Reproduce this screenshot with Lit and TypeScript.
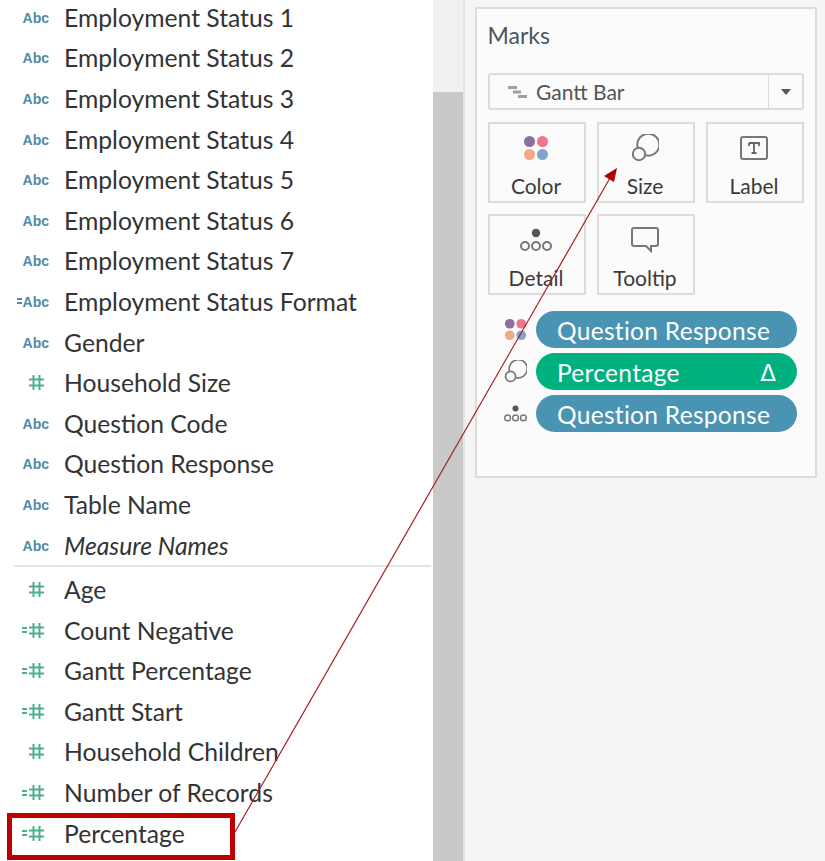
import { LitElement, css, html, svg } from 'lit'
import { customElement } from 'lit/decorators.js'

type Kind = 'abc' | 'calcAbc' | 'num' | 'calcNum'

const dims: [Kind, string, boolean?][] = [
  ['abc', 'Employment Status 1'],
  ['abc', 'Employment Status 2'],
  ['abc', 'Employment Status 3'],
  ['abc', 'Employment Status 4'],
  ['abc', 'Employment Status 5'],
  ['abc', 'Employment Status 6'],
  ['abc', 'Employment Status 7'],
  ['calcAbc', 'Employment Status Format'],
  ['abc', 'Gender'],
  ['num', 'Household Size'],
  ['abc', 'Question Code'],
  ['abc', 'Question Response'],
  ['abc', 'Table Name'],
  ['abc', 'Measure Names', true],
]

const measures: [Kind, string][] = [
  ['num', 'Age'],
  ['calcNum', 'Count Negative'],
  ['calcNum', 'Gantt Percentage'],
  ['calcNum', 'Gantt Start'],
  ['num', 'Household Children'],
  ['calcNum', 'Number of Records'],
  ['calcNum', 'Percentage'],
]

const hash = (color: string) => svg`
  <svg class="hash" width="17" height="17" viewBox="0 0 17 17" fill="none" stroke=${color} stroke-width="2">
    <path d="M5.5 1v15M11.5 1v15M1 5.5h15M1 11.5h15" />
  </svg>`

const colorIcon = (size: number) => html`
  <svg width=${size} height=${size} viewBox="0 0 26 26">
    <circle cx="6.5" cy="6.5" r="5.5" fill="#8b6f9e" />
    <circle cx="19.5" cy="6.5" r="5.5" fill="#f0758a" />
    <circle cx="6.5" cy="19.5" r="5.5" fill="#f3a983" />
    <circle cx="19.5" cy="19.5" r="5.5" fill="#7fa5cf" />
  </svg>`

const sizeIcon = (size: number) => html`
  <svg width=${size} height=${size} viewBox="0 0 28 28" fill="none" stroke="#777" stroke-width="2">
    <path d="M6.6 13.2A11 11 0 1 1 14.8 21.4" />
    <circle cx="8" cy="20" r="6.2" />
  </svg>`

const detailIcon = (w: number) => html`
  <svg width=${w} height=${w * 0.75} viewBox="0 0 32 24" fill="none" stroke="#777" stroke-width="2">
    <circle cx="16" cy="5" r="4.2" fill="#555" stroke="none" />
    <circle cx="5" cy="18" r="4" />
    <circle cx="16" cy="18" r="4" />
    <circle cx="27" cy="18" r="4" />
  </svg>`

@customElement('app-root')
export class AppRoot extends LitElement {
  static styles = css`
    :host {
      display: block;
      position: relative;
      width: 825px;
      height: 861px;
      overflow: hidden;
      background: #f5f5f5;
      font-family: Lato, 'Open Sans', sans-serif;
      color: #333;
    }
    .page {
      display: flex;
      height: 100%;
    }
    .fields {
      width: 433px;
      flex: none;
      background: #fff;
      padding: 0 2px 0 14px;
      box-sizing: border-box;
      overflow: hidden;
    }
    .row {
      display: flex;
      align-items: center;
      height: 40.6px;
      font-size: 24.7px;
      white-space: nowrap;
    }
    .first {
      margin-top: -3px;
    }
    .row i {
      font-style: italic;
    }
    .glyph {
      width: 50px;
      flex: none;
      display: flex;
      align-items: center;
      justify-content: flex-end;
      padding-right: 15px;
      box-sizing: border-box;
    }
    .abc {
      font: bold 14px 'Liberation Sans', Arial, sans-serif;
      color: #4e8ca8;
      margin-top: 1px;
    }
    .eq {
      display: inline-block;
      width: 5px;
      height: 2px;
      border-top: 2px solid;
      border-bottom: 2px solid;
      margin-right: 1px;
    }
    .eq.blue {
      color: #4e8ca8;
    }
    .eq.green {
      color: #4fae8b;
      width: 4.5px;
      margin-right: 1.5px;
    }
    .hash {
      display: block;
      margin-right: 4px;
    }
    .divider {
      height: 2px;
      background: #e4e4e4;
    }
    .measures {
      margin-top: 2px;
    }
    .scroll {
      width: 30px;
      flex: none;
      background: #f0f0f0;
      display: flex;
      flex-direction: column;
      padding-top: 92px;
      box-sizing: border-box;
    }
    .thumb {
      flex: 1;
      background: #c9c9c9;
    }
    .side {
      flex: 1;
      border-left: 2px solid #e6e6e6;
      padding: 7px 8px 0 10px;
    }
    .marks {
      height: 471px;
      box-sizing: border-box;
      background: #fbfbfb;
      border: 2px solid #dcdcdc;
      padding: 0 11px;
    }
    .title {
      font-size: 23px;
      line-height: 28px;
      margin-top: 12px;
      color: #4a5560;
      margin-left: -0.5px;
    }
    .dropdown {
      display: flex;
      align-items: center;
      height: 37px;
      margin-top: 24px;
      border: 2px solid #dcdcdc;
      border-radius: 3px;
      box-sizing: border-box;
      font-size: 21px;
      color: #555;
    }
    .dropdown .mark {
      flex: 1;
      display: flex;
      align-items: center;
      gap: 9px;
      padding-left: 18px;
    }
    .caret {
      width: 33px;
      height: 100%;
      border-left: 1px solid #dcdcdc;
      display: flex;
      align-items: center;
      justify-content: center;
    }
    .caret::after {
      content: '';
      border-left: 5.5px solid transparent;
      border-right: 5.5px solid transparent;
      border-top: 6px solid #555;
    }
    .cards {
      display: grid;
      grid-template-columns: repeat(3, 98px);
      grid-auto-rows: 81px;
      gap: 11px;
      margin-top: 12px;
    }
    .card {
      border: 2px solid #dcdcdc;
      box-sizing: border-box;
      display: flex;
      flex-direction: column;
      align-items: center;
      font-size: 21px;
      color: #3a3a3a;
    }
    .card .ico {
      flex: none;
      height: 44px;
      display: flex;
      align-items: center;
      justify-content: center;
      margin-top: 2px;
      margin-left: -2px;
    }
    .card span {
      flex: none;
      line-height: 31px;
      margin-left: -2px;
    }
    .pills {
      display: flex;
      flex-direction: column;
      gap: 5px;
      margin-top: 16px;
    }
    .pillrow {
      display: flex;
      align-items: center;
    }
    .pillico {
      width: 48px;
      flex: none;
      display: flex;
      justify-content: flex-end;
      padding-right: 9px;
      box-sizing: border-box;
    }
    .pill {
      width: 261px;
      height: 37px;
      border-radius: 19px;
      background: #4a94b3;
      color: #fff;
      font-size: 24.5px;
      display: flex;
      align-items: center;
      justify-content: space-between;
      padding: 2px 21px 0 21px;
      box-sizing: border-box;
      letter-spacing: 0.3px;
    }
    .pill.green {
      background: #00b180;
    }
    .delta {
      font: 23px 'DejaVu Sans', sans-serif;
      letter-spacing: 0;
    }
    .overlay {
      position: absolute;
      inset: 0;
      pointer-events: none;
    }
    .redbox {
      position: absolute;
      left: 7px;
      top: 813px;
      width: 228px;
      height: 47px;
      box-sizing: border-box;
      border: 5px solid #c00000;
    }
  `

  private glyph(kind: Kind) {
    if (kind === 'abc') return html`<span class="abc">Abc</span>`
    if (kind === 'calcAbc') return html`<span class="eq blue"></span><span class="abc">Abc</span>`
    if (kind === 'num') return hash('#4fae8b')
    return html`<span class="eq green"></span>${hash('#4fae8b')}`
  }

  private row(kind: Kind, name: string, italic = false, first = false) {
    return html`
      <div class="row ${first ? 'first' : ''}">
        <span class="glyph">${this.glyph(kind)}</span>
        ${italic ? html`<i>${name}</i>` : name}
      </div>`
  }

  render() {
    return html`
      <div class="page">
        <div class="fields">
          ${dims.map(([k, n, it], i) => this.row(k, n, it, i === 0))}
          <div class="divider"></div>
          <div class="measures">${measures.map(([k, n]) => this.row(k, n))}</div>
        </div>
        <div class="scroll"><div class="thumb"></div></div>
        <div class="side">
          <div class="marks">
            <div class="title">Marks</div>
            <div class="dropdown">
              <div class="mark">
                <svg width="19" height="14" viewBox="0 0 19 14" fill="none" stroke="#a0a0a0" stroke-width="3">
                  <path d="M0 2.5h9M5 7h8M10 11.5h9" />
                </svg>
                Gantt Bar
              </div>
              <div class="caret"></div>
            </div>
            <div class="cards">
              <div class="card"><div class="ico">${colorIcon(26)}</div><span>Color</span></div>
              <div class="card"><div class="ico">${sizeIcon(28)}</div><span>Size</span></div>
              <div class="card">
                <div class="ico">
                  <svg width="28" height="24" viewBox="0 0 28 24" fill="none">
                    <rect x="1" y="1" width="26" height="22" rx="2" stroke="#777" stroke-width="2" />
                    <path d="M9 7h10v3M14 7v10M11.5 17h5M9 7v3" stroke="#666" stroke-width="1.8" />
                  </svg>
                </div>
                <span>Label</span>
              </div>
              <div class="card"><div class="ico">${detailIcon(32)}</div><span>Detail</span></div>
              <div class="card">
                <div class="ico">
                  <svg width="28" height="26" viewBox="0 0 28 26" fill="none" stroke="#777" stroke-width="2">
                    <path d="M3 1h22a2 2 0 0 1 2 2v14a2 2 0 0 1-2 2h-5v5l-5-5H3a2 2 0 0 1-2-2V3a2 2 0 0 1 2-2z" />
                  </svg>
                </div>
                <span>Tooltip</span>
              </div>
            </div>
            <div class="pills">
              <div class="pillrow">
                <div class="pillico">${colorIcon(23)}</div>
                <div class="pill">Question Response</div>
              </div>
              <div class="pillrow">
                <div class="pillico">${sizeIcon(23)}</div>
                <div class="pill green">Percentage <span class="delta">Δ</span></div>
              </div>
              <div class="pillrow">
                <div class="pillico">${detailIcon(23)}</div>
                <div class="pill">Question Response</div>
              </div>
            </div>
          </div>
        </div>
      </div>
      <div class="overlay">
        <div class="redbox"></div>
        <svg width="825" height="861">
          <path d="M235 832L610 178" stroke="#a81e22" stroke-width="1.2" fill="none" />
          <path d="M617 168L604 176L614 182Z" fill="#b00000" />
        </svg>
      </div>
    `
  }
}
